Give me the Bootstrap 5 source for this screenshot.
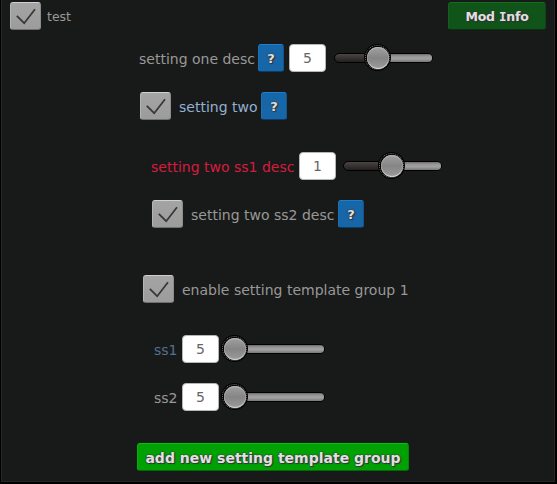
<!DOCTYPE html>
<html lang="en">
<head>
<meta charset="utf-8">
<meta name="viewport" content="width=device-width, initial-scale=1">
<title>Mod settings</title>
<link href="https://cdn.jsdelivr.net/npm/bootstrap@5.3.0/dist/css/bootstrap.min.css" rel="stylesheet">
<style>
body { background: #000; font-family: "DejaVu Sans", Verdana, sans-serif; font-size: 14px; line-height: 20px; color: #989898; overflow: hidden; }
.panel { width: 554px; height: 482px; margin-left: 1px; background: #181a19; border: 1px solid #292425; border-top: 0; }
.topbar { height: 34px; padding: 0 8px 2px 8px; }
.setting { height: 28px; }
.setting.first { margin: 10px 0 20px 137px; }
.setting.second { margin: 0 0 32px 138px; }
.setting.sub1 { margin: 0 0 20px 149px; }
.setting.sub2 { margin: 0 0 47px 150px; }
.setting.template { margin: 0 0 32px 141px; }
.setting.ss { margin: 0 0 20px 152px; }
.setting.last { margin-bottom: 32px; }
.lbl { white-space: nowrap; flex: none; padding-top: 1px; }
.lbl.title { font-size: 12.5px; margin-left: -2px; padding-top: 2px; }
.w-one { width: 119px; } .w-two { width: 82px; } .w-sub1 { width: 148px; } .w-sub2 { width: 147px; } .w-ss { width: 28px; }
.c-blue { color: #93b0d2; } .c-red { color: #d81a3e; } .c-steel { color: #527090; }
.check { flex: none; width: 31px; height: 28px; margin-right: 8px; border-radius: 3px; background: linear-gradient(#a4a4a4, #9c9c9c); border: 1px solid; border-color: #d0d0d0 #8c8c8c #707070 #b4b4b4; }
.check svg { display: block; width: 29px; height: 26px; }
.glow { color: #e0e0e0; font-weight: 700; text-shadow: 0 0 1px #333, 0 0 1px #333, 0 0 2px #444, 1px 1px 1px #333; }
.help { flex: none; width: 26px; height: 28px; border-radius: 3px; padding: 0; font-size: 13px; line-height: 27px; background: #1767a8; border: 1px solid; border-color: #1c7fd0 #14568c #0c3c66 #1a70b6; }
.num { flex: none; width: 37px; height: 28px; padding: 0; text-align: center; font-size: 14px; line-height: 20px; background: #fff; color: #666; border: 1px solid #b5b5b5; border-radius: 4px; }
.first .num { margin-left: 5px; }
.slide { flex: none; position: relative; width: 99px; height: 28px; margin-left: 7px; }
.first .slide { margin-left: 7.5px; }
.slide .rail { width: 100%; height: 10px; border: 1px solid #000; border-radius: 5px; background: linear-gradient(#4a4443, #393433 45%, #242020); }
.slide .rest { position: absolute; right: 1px; top: 10px; height: 8px; border-radius: 0 4px 4px 0; background: linear-gradient(#6c6867, #959595 25%, #a2a2a2 60%, #777); }
.slide .knob { position: absolute; top: 0; width: 27px; height: 27px; margin-left: -13.5px; border-radius: 50%; background: #000; }
.knob::before { content: ""; position: absolute; inset: 1px; border: 1px dotted #777; border-radius: 50%; }
.knob::after { content: ""; position: absolute; inset: 2.5px; border-radius: 50%; background: linear-gradient(#a0a0a0, #858585 50%, #9b9b9b); box-shadow: inset 0 -1px 1px #ddd, inset 0 1px 1px #bbb; }
.act { height: 28px; padding: 1px 0 0; border-radius: 3px; line-height: 26px; }
.info { width: 98px; font-size: 12.5px; letter-spacing: -.2px; background: #11541a; border: 1px solid; border-color: #126f1e #0d4516 #08330e #126020; }
.info .serif-i { font-family: "DejaVu Sans Mono", monospace; }
.info span { position: static; }
.add { display: block; width: 272px; margin: 0 0 0 135px; font-size: 14px; background: #00a203; border: 1px solid; border-color: #05c30a #028505 #046807 #05b009; }
</style>
<script src="https://cdn.jsdelivr.net/npm/bootstrap@5.3.0/dist/js/bootstrap.bundle.min.js"></script>
</head>
<body>
<svg class="d-none"><symbol id="tick" viewBox="0 0 29 26"><path d="M5.8 12.8 13.2 20.2 24 6.3" fill="none" stroke="#383838" stroke-width="1.8"/></symbol></svg>
<main class="panel">
  <header class="topbar d-flex align-items-center">
    <span class="check"><svg><use href="#tick"/></svg></span>
    <span class="lbl title">test</span>
    <button class="btn act info glow ms-auto"><span>Mod <span class="serif-i">I</span>nfo</span></button>
  </header>
  <div class="setting first d-flex align-items-center">
    <span class="lbl w-one">setting one desc</span>
    <button class="btn help glow">?</button>
    <input class="num" value="5" aria-label="Setting one">
    <div class="slide d-flex align-items-center"><div class="rail"></div><div class="rest" style="width:53px"></div><div class="knob" style="left:44px"></div></div>
  </div>
  <div class="setting second d-flex align-items-center">
    <span class="check"><svg><use href="#tick"/></svg></span>
    <span class="lbl w-two c-blue">setting two</span>
    <button class="btn help glow">?</button>
  </div>
  <div class="setting sub1 d-flex align-items-center">
    <span class="lbl w-sub1 c-red">setting two ss1 desc</span>
    <input class="num" value="1" aria-label="ss1">
    <div class="slide d-flex align-items-center"><div class="rail"></div><div class="rest" style="width:48px"></div><div class="knob" style="left:48.5px"></div></div>
  </div>
  <div class="setting sub2 d-flex align-items-center">
    <span class="check"><svg><use href="#tick"/></svg></span>
    <span class="lbl w-sub2">setting two ss2 desc</span>
    <button class="btn help glow">?</button>
  </div>
  <div class="setting template d-flex align-items-center">
    <span class="check"><svg><use href="#tick"/></svg></span>
    <span class="lbl">enable setting template group 1</span>
  </div>
  <div class="setting ss d-flex align-items-center">
    <span class="lbl w-ss c-steel">ss1</span>
    <input class="num" value="5" aria-label="Template ss1">
    <div class="slide d-flex align-items-center"><div class="rail"></div><div class="rest" style="width:87px"></div><div class="knob" style="left:8.5px"></div></div>
  </div>
  <div class="setting ss last d-flex align-items-center">
    <span class="lbl w-ss">ss2</span>
    <input class="num" value="5" aria-label="Template ss2">
    <div class="slide d-flex align-items-center"><div class="rail"></div><div class="rest" style="width:87px"></div><div class="knob" style="left:8.5px"></div></div>
  </div>
  <button class="btn act add glow">add new setting template group</button>
</main>
</body>
</html>
